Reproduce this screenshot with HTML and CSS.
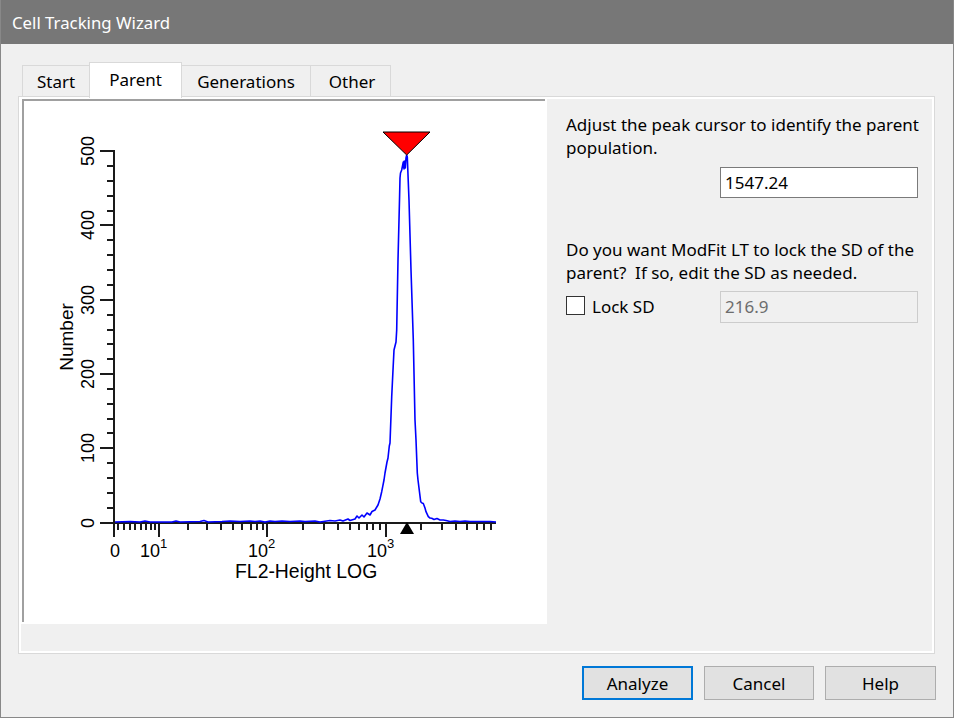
FILE: index.html
```html
<!DOCTYPE html>
<html>
<head>
<meta charset="utf-8">
<title>Cell Tracking Wizard</title>
<link rel="stylesheet" href="styles.css">
</head>
<body>
<div class="window">
  <div class="titlebar">Cell Tracking Wizard</div>
  <div class="body">
    <div class="tabs">
      <div class="tab tab-start">Start</div>
      <div class="tab tab-parent active">Parent</div>
      <div class="tab tab-gen">Generations</div>
      <div class="tab tab-other">Other</div>
    </div>
    <div class="panel">
      <div class="chart">
        <div class="plot">
          <svg class="plot-svg" width="521" height="521" viewBox="24 101 521 521" xmlns="http://www.w3.org/2000/svg">
            <g class="axis" stroke="#1a1a1a" stroke-width="2" fill="none">
              <line x1="114" y1="150" x2="114" y2="524"/>
              <line x1="113" y1="523" x2="496" y2="523"/>
              <!-- y major ticks -->
              <line x1="100" y1="151" x2="114" y2="151"/>
              <line x1="100" y1="225" x2="114" y2="225"/>
              <line x1="100" y1="300" x2="114" y2="300"/>
              <line x1="100" y1="374" x2="114" y2="374"/>
              <line x1="100" y1="448" x2="114" y2="448"/>
              <line x1="100" y1="523" x2="114" y2="523"/>
              <!-- y minor ticks -->
              <path d="M107 166H114M107 181H114M107 196H114M107 211H114M107 240H114M107 255H114M107 270H114M107 285H114M107 315H114M107 330H114M107 344H114M107 359H114M107 389H114M107 404H114M107 419H114M107 433H114M107 463H114M107 478H114M107 493H114M107 508H114"/>
              <!-- x major ticks -->
              <path d="M114 523V537M159 523V537M267 523V537M386 523V537"/>
              <!-- x minor ticks -->
              <path d="M118 523V530M124 523V530M130 523V530M135 523V530M141 523V530M146 523V530M151 523V530M155 523V530M188 523V530M207 523V530M221 523V530M233 523V530M242 523V530M251 523V530M257 523V530M263 523V530M303 523V530M324 523V530M338 523V530M350 523V530M359 523V530M367 523V530M373 523V530M380 523V530M407 523V530M421 523V530M442 523V530M456 523V530M467 523V530M477 523V530M484 523V530M491 523V530"/>
            </g>
            <g class="ylabels">
              <text transform="translate(94 151) rotate(-90)" text-anchor="middle">500</text>
              <text transform="translate(94 225) rotate(-90)" text-anchor="middle">400</text>
              <text transform="translate(94 300) rotate(-90)" text-anchor="middle">300</text>
              <text transform="translate(94 374) rotate(-90)" text-anchor="middle">200</text>
              <text transform="translate(94 448) rotate(-90)" text-anchor="middle">100</text>
              <text transform="translate(94 523) rotate(-90)" text-anchor="middle">0</text>
            </g>
            <text class="ytitle" transform="translate(73 337) rotate(-90)" text-anchor="middle">Number</text>
            <g class="xlabels">
              <text x="110" y="557">0</text>
              <text x="140" y="557">10<tspan class="sup" dy="-9">1</tspan></text>
              <text x="248" y="557">10<tspan class="sup" dy="-9">2</tspan></text>
              <text x="367" y="557">10<tspan class="sup" dy="-9">3</tspan></text>
            </g>
            <text class="xtitle" x="235" y="578">FL2-Height LOG</text>
            <polyline class="curve" fill="none" stroke="#0000ff" stroke-width="1.6" stroke-linejoin="round"
              points="115,522 130,521.5 140,522 145,521 150,522 172,522 176,521 180,522 200,521.5 204,520.5 208,522 222,521.5 230,521 240,521.5 250,521 255,521.5 260,521 265,522 270,521 275,521.5 282,521 290,521.5 300,521 305,521.5 315,521 320,522 330,520.5 335,521 340,520 343,521 348,519 350,520.5 355,519 357,516 359,518 362,515 364,517 367,513 370,515 372,511.5 375,510 378,505 380,499 381.7,491.7 382.7,486.7 384,480 385,473 387,462 388,458 389.3,446 390,443 391.7,397 393,370 394,350 396,342 396.7,330 398,260 399.5,200 400,178 400.5,173 401.7,170 403.3,162 404,169 404.3,161 405.3,168 406,158 406.7,155 407.3,157 409,200 411,270 413.3,340 415,420 416,440 417.3,473 418,480 420.7,501.7 422,503 423.3,503.5 425,508 426,511.7 428.3,516.7 430,518 431.7,518.3 434,519.5 437,518.5 440,520 443.3,520 446,520.5 450,521.5 455,521 460,521.5 465,521 470,521.5 480,521.5 490,521.5 496,522"/>
            <polygon class="marker" points="407,522 400,534 414,534" fill="#000"/>
            <polygon class="cursor" points="383,132 430,132 406.7,155" fill="#ff0000" stroke="#000" stroke-width="1"/>
          </svg>
        </div>
      </div>
      <div class="side">
        <p class="para">Adjust the peak cursor to identify the parent<br>population.</p>
        <div class="field field-peak">1547.24</div>
        <p class="para para-q">Do you want ModFit LT to lock the SD of the<br>parent?&nbsp; If so, edit the SD as needed.</p>
        <div class="lock-row">
          <span class="checkbox"></span>
          <span class="lock-label">Lock SD</span>
          <div class="field field-disabled">216.9</div>
        </div>
      </div>
    </div>
    <div class="buttons">
      <div class="btn btn-default">Analyze</div>
      <div class="btn btn-cancel">Cancel</div>
      <div class="btn">Help</div>
    </div>
  </div>
</div>
</body>
</html>
```

FILE: styles.css
```css
html, body {
  margin: 0;
  padding: 0;
  background: #f0f0f0;
}

body {
  font-family: "Noto Sans", "Open Sans", sans-serif;
  color: #000;
}

.window {
  width: 954px;
  height: 718px;
  box-sizing: border-box;
  border: 1px solid #888;
  border-top: none;
  background: #f0f0f0;
  display: flex;
  flex-direction: column;
}

.titlebar {
  height: 44px;
  flex: none;
  background: #777777;
  color: #ffffff;
  font-size: 16.8px;
  padding-left: 11px;
  display: flex;
  align-items: center;
}

.body {
  padding: 18px 17px 0 17px;
  display: flex;
  flex-direction: column;
}

.tabs {
  display: flex;
  align-items: flex-end;
  height: 35px;
  margin-left: 4px;
}

.tab {
  box-sizing: border-box;
  height: 32px;
  border: 1px solid #d9d9d9;
  border-bottom: none;
  background: #f0f0f0;
  font-size: 17px;
  display: flex;
  align-items: center;
  justify-content: center;
  margin-left: -1px;
}

.tab:first-child {
  margin-left: 0;
}

.tab-start { width: 68px; }
.tab-parent { width: 93px; }
.tab-gen { width: 130px; }
.tab-other { width: 81px; padding-left: 3px; }

.tab.active {
  height: 36px;
  margin-bottom: -1px;
  background: #ffffff;
  position: relative;
  z-index: 1;
  padding-bottom: 2px;
}

.panel {
  box-sizing: border-box;
  width: 917px;
  height: 558px;
  margin-top: -1px;
  border: 1px solid #d9d9d9;
  box-shadow: inset 0 0 0 2px #ffffff;
  background: #f0f0f0;
  display: flex;
  align-items: flex-start;
}

.chart {
  box-sizing: border-box;
  width: 527px;
  height: 527px;
  margin-left: 1px;
  background: #ffffff;
  padding: 2px 0 0 2px;
}

.plot {
  box-sizing: border-box;
  width: 523px;
  height: 523px;
  border-top: 2px solid #a0a0a0;
  border-left: 2px solid #a0a0a0;
}

.plot-svg {
  display: block;
}

.plot-svg text {
  font-family: "Liberation Sans", Arial, sans-serif;
  fill: #000;
}

.ylabels text {
  font-size: 18px;
}

.ytitle {
  font-size: 19px;
}

.xlabels text {
  font-size: 18px;
}

.xlabels .sup {
  font-size: 13px;
}

.xtitle {
  font-size: 19.4px;
}

.side {
  width: 352px;
  margin-left: 19px;
  padding-top: 16px;
  display: flex;
  flex-direction: column;
}

.para {
  margin: 0;
  font-size: 17px;
  line-height: 23px;
  white-space: nowrap;
}

.para-q {
  margin-top: 40px;
}

.field {
  box-sizing: border-box;
  width: 198px;
  height: 31px;
  border: 1px solid #7a7a7a;
  background: #ffffff;
  font-size: 17px;
  line-height: 29px;
  padding-left: 4px;
  align-self: flex-end;
}

.field-peak {
  margin-top: 8px;
}

.lock-row {
  margin-top: 7px;
  display: flex;
  align-items: flex-start;
  height: 32px;
}

.checkbox {
  box-sizing: border-box;
  width: 19px;
  height: 19px;
  border: 1px solid #333333;
  background: #ffffff;
  margin-top: 5px;
  flex: none;
}

.lock-label {
  font-size: 17px;
  line-height: 23px;
  margin-top: 4px;
  margin-left: 7px;
}

.field-disabled {
  height: 32px;
  line-height: 30px;
  margin-left: auto;
  border-color: #cccccc;
  background: #f0f0f0;
  color: #6d6d6d;
}

.buttons {
  display: flex;
  justify-content: flex-end;
  gap: 11px;
  margin-top: 12px;
}

.btn {
  box-sizing: border-box;
  width: 111px;
  height: 34px;
  border: 1px solid #adadad;
  background: #e1e1e1;
  font-size: 17px;
  display: flex;
  align-items: center;
  justify-content: center;
}

.btn-cancel {
  width: 110px;
}

.btn-default {
  border: 2px solid #0078d7;
}
```
